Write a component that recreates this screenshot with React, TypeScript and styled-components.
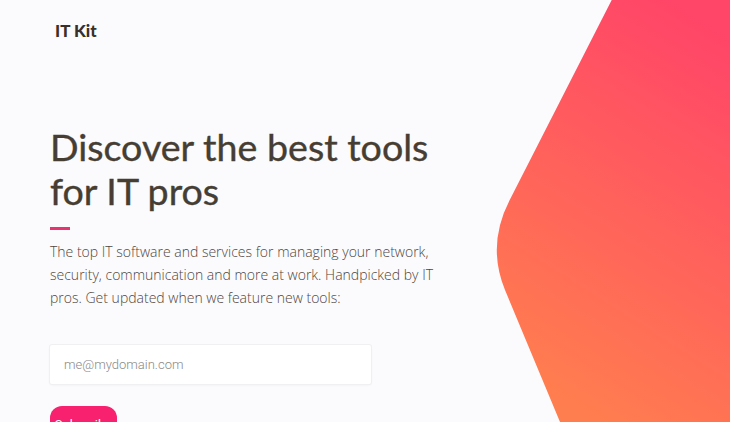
import styled, { createGlobalStyle } from "styled-components";

const GlobalStyle = createGlobalStyle`
	html, body {
		margin: 0;
		padding: 0;
		background: #fbfbfd;
	}
	* {
		box-sizing: border-box;
	}
`;

const Page = styled.div`
	display: grid;
	grid-template-columns: 1fr 244px;
	height: 422px;
	overflow: hidden;
	background: #fbfbfd;
`;

const Content = styled.div`
	display: flex;
	flex-direction: column;
	padding-left: 50px;
`;

const Logo = styled.div`
	font-family: "Lato", sans-serif;
	font-weight: 900;
	font-size: 17px;
	color: #3a3027;
	padding: 20px 0 0 5px;
	height: 125px;
`;

const Title = styled.h1`
	margin: 0;
	font-family: "Lato", sans-serif;
	font-weight: 400;
	font-size: 37.6px;
	line-height: 44px;
	color: #463d33;
	-webkit-text-stroke: 0.4px #463d33;
	width: 400px;
`;

const Accent = styled.div`
	width: 20px;
	height: 3px;
	background: #e8336f;
	margin: 14px 0 10px;
`;

const Lead = styled.p`
	margin: 0;
	font-family: "Open Sans", sans-serif;
	font-weight: 300;
	font-size: 14px;
	line-height: 23px;
	color: #4f463d;
	white-space: nowrap;
`;

const EmailInput = styled.input`
	margin-top: 36px;
	width: 321px;
	height: 39px;
	border: none;
	border-radius: 2px;
	background: #ffffff;
	box-shadow: 0 0 0 1px #f0f0f3, 0 1px 3px rgba(0, 0, 0, 0.06);
	padding: 0 14px;
	font-family: "Roboto", sans-serif;
	font-weight: 300;
	font-size: 13px;
	color: #333;
	outline: none;

	&::placeholder {
		color: #8a8a8a;
	}
`;

const SubscribeButton = styled.button`
	margin-top: 22px;
	width: 67px;
	height: 36px;
	border: none;
	border-radius: 12px;
	background: #f8216f;
	color: #fff;
	font-family: "Roboto", sans-serif;
	font-size: 13px;
	padding: 0;
	cursor: pointer;
`;

const Art = styled.div`
	height: 422px;

	svg {
		display: block;
		width: 244px;
		height: 422px;
	}
`;

export default function App() {
	return (
		<>
			<GlobalStyle />
			<Page>
				<Content>
					<Logo>IT Kit</Logo>
					<Title>Discover the best tools for IT pros</Title>
					<Accent />
					<Lead>
						The top IT software and services for managing your network,
						<br />
						security, communication and more at work. Handpicked by IT
						<br />
						pros. Get updated when we feature new tools:
					</Lead>
					<EmailInput type="email" placeholder="me@mydomain.com" />
					<div>
						<SubscribeButton>Subscribe</SubscribeButton>
					</div>
				</Content>
				<Art>
					<svg viewBox="0 0 244 422" preserveAspectRatio="none">
						<defs>
							<linearGradient id="blob" x1="0.75" y1="0" x2="0.4" y2="1">
								<stop offset="0" stopColor="#ff4568" />
								<stop offset="1" stopColor="#ff7e4f" />
							</linearGradient>
						</defs>
						<path
							d="M125.7 0 L23.7 200 Q0.5 245 19 290 L74 422 L244 422 L244 0 Z"
							fill="url(#blob)"
						/>
					</svg>
				</Art>
			</Page>
		</>
	);
}
